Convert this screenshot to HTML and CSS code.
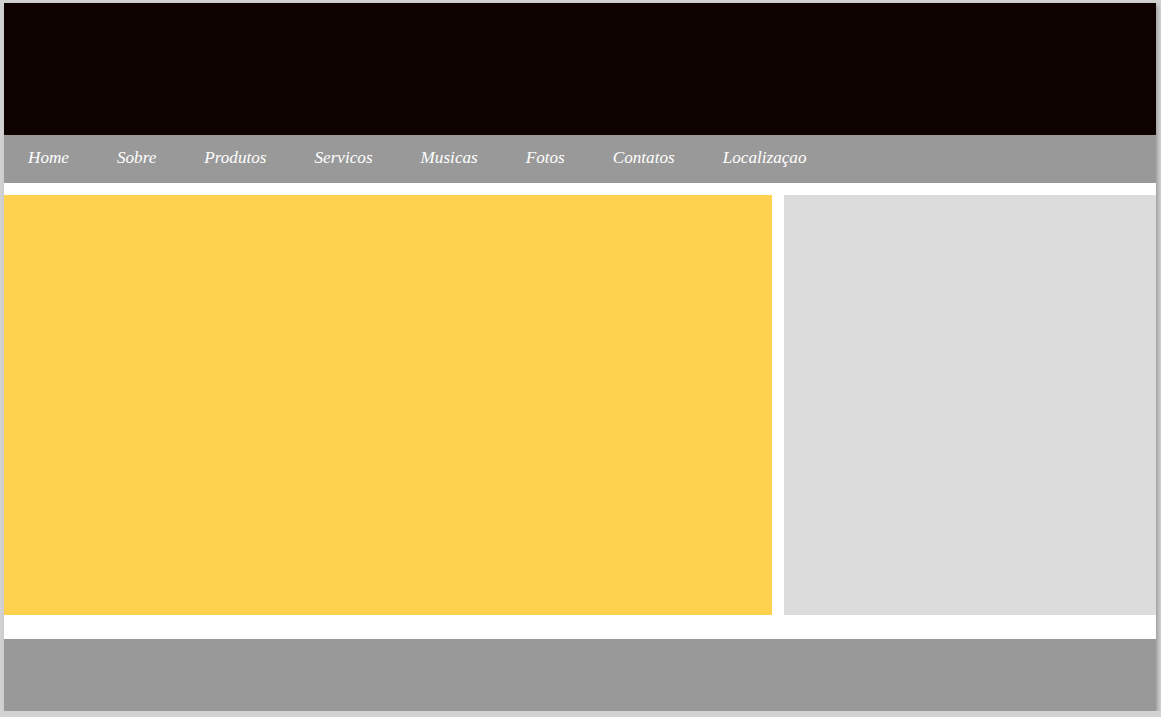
FILE: index.html
```html
<!DOCTYPE html>
<html lang="pt">
<head>
<meta charset="utf-8">
<title>Layout</title>
<link rel="stylesheet" href="styles.css">
</head>
<body>
<div class="page">
  <header class="header"></header>
  <nav class="nav">
    <ul class="menu">
      <li class="menu-item"><a href="#">Home</a></li>
      <li class="menu-item"><a href="#">Sobre</a></li>
      <li class="menu-item"><a href="#">Produtos</a></li>
      <li class="menu-item"><a href="#">Servicos</a></li>
      <li class="menu-item"><a href="#">Musicas</a></li>
      <li class="menu-item"><a href="#">Fotos</a></li>
      <li class="menu-item"><a href="#">Contatos</a></li>
      <li class="menu-item"><a href="#">Localizaçao</a></li>
    </ul>
  </nav>
  <div class="main">
    <section class="content"></section>
    <aside class="sidebar"></aside>
  </div>
  <footer class="footer"></footer>
</div>
</body>
</html>
```

FILE: styles.css
```css
html, body {
  margin: 0;
  padding: 0;
}
body {
  background: #d2d2d2;
  padding: 3px 0 0 4px;
  font-family: "Liberation Serif", "Times New Roman", serif;
}
.page {
  width: 1152px;
  height: 708px;
  background: #ffffff;
  box-shadow: 2px 2px 4px rgba(0, 0, 0, 0.25);
  display: flex;
  flex-direction: column;
}
.header {
  height: 132px;
  background: #0d0200;
}
.nav {
  height: 48px;
  background: #999999;
}
.menu {
  list-style: none;
  margin: 0;
  padding: 0;
  display: flex;
}
.menu-item a {
  display: block;
  padding: 0 24px;
  line-height: 45px;
  color: #ffffff;
  font-style: italic;
  font-size: 17.15px;
  text-decoration: none;
}
.main {
  margin-top: 12px;
  display: flex;
  gap: 12px;
  height: 420px;
}
.content {
  width: 768px;
  background: #fed24f;
}
.sidebar {
  flex: 1;
  background: #dcdcdc;
}
.footer {
  margin-top: 24px;
  height: 72px;
  background: #999999;
}
```
